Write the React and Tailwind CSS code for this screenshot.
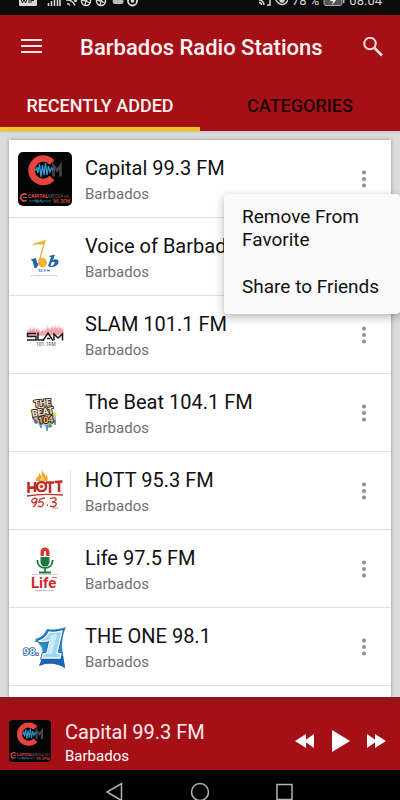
import { useState } from 'react';

function CapitalLogo({ className }) {
  return (
    <svg className={className} viewBox="0 0 54 54" aria-hidden="true">
      <rect width="54" height="54" rx="5" fill="#050505" />
      <path d="M34 10.500A11.700 11.700 0 1 0 34 26" fill="none" stroke="#e8443f" strokeWidth="6.500" />
      <path d="M35.500 24.500V13.500l3.500 5 3.500-5v11" fill="none" stroke="#454446" strokeWidth="2.600" />
      <path d="M16 18h2l1-3 1 6 1.500-9 1.500 13 1.500-12 1.500 10 1.500-12 1.500 12 1.500-9 1.500 6 1.500-4 1.500 2" fill="none" stroke="#2f9bd0" strokeWidth="1.300" />
      <path d="M8.500 43a3.400 3.400 0 1 0 0 5" fill="none" stroke="#e8443f" strokeWidth="1.600" />
      <path d="M5 45.500h4" stroke="#2f9bd0" strokeWidth="1" />
      <text x="10" y="46" fontSize="5" fontWeight="700" fill="#e04a44">CAPITAL</text>
      <text x="30" y="46" fontSize="5" fill="#655f5e">MEDIA</text>
      <text x="46" y="46" fontSize="4" fill="#8b4b48">HD</text>
      <path d="M11 49h5l1-1.500 1 3 1-3 1 3 1-2 1 1 1-2 1 3 1-1.500h8" fill="none" stroke="#2d7ea6" strokeWidth=".8" />
      <text x="35" y="51" fontSize="5" fontWeight="700" fill="#c93a36">99.3FM</text>
    </svg>
  );
}

function VoiceLogo({ className }) {
  return (
    <svg className={className} viewBox="0 0 54 54" aria-hidden="true">
      <path d="M27 11l-1 3-4.500 16" fill="none" stroke="#e9ab2f" strokeWidth="1.200" />
      <path d="M14 16c3-5 8-3 13.500-6.500l-1 4.500c-4 1-8-.5-12.500 2z" fill="#f2b134" />
      <path d="M12.500 29.500l5.500-1.500 1.200 5.500 2-4h2.300L18.500 38h-2L14.500 31z" fill="#1d68ac" />
      <ellipse cx="24.500" cy="32.500" rx="4.500" ry="4.800" fill="#f4b52e" />
      <path d="M31 26l6-1.500-2 5.500c3-1.500 6-.5 5.500 2.500-.6 4-8 6-10.500 3.500l3-8.500zM33.500 32.500l-1 3.500c2 .5 4-1.500 4-3 0-1.500-2-1.500-3-.5z" fill="#1d68ac" fillRule="evenodd" />
      <text x="20" y="42" fontSize="4" fontWeight="700" fontStyle="italic" fill="#3f7eb8">92.9</text>
      <path d="M29 40.500h3" stroke="#3f7eb8" strokeWidth="1.500" />
      <path d="M13 45.500h26" stroke="#b9c0c8" strokeWidth="1.200" strokeDasharray="1.500 1" />
    </svg>
  );
}

function SlamLogo({ className }) {
  return (
    <svg className={className} viewBox="0 0 54 54" aria-hidden="true">
      <path d="M9 28v-5l1-2 1 3 1-6 1 5 1-3 1 2 1-4 1 5 1-1 1-3 1 4 1-2 1 3 2-1 1-2 1 3 1-4 1 3 1-6 1 4 1-2 1 4 1-5 1 3 1-4 1 6 1-7 1 5 1-3 1 4 1-5 1 4 1-2 1 3 1-4 .5 9z" fill="#eda3a6" />
      <g fill="none" stroke="#1c1a1c" strokeWidth="1.500">
        <path d="M18 25.500h-8.500v3H18v3.500H9" />
        <path d="M20 24.500V32h6" />
        <path d="M25 32.500l5-7.500 5 7.500M29 30.500h3" />
        <path d="M36 32.500V26l4 4 4.500-4v6.500" />
      </g>
      <text x="18" y="38" fontSize="5" fill="#4b484b">101.1FM</text>
    </svg>
  );
}

function BeatLogo({ className }) {
  return (
    <svg className={className} viewBox="0 0 54 54" aria-hidden="true">
      <path d="M16 31l1 7 2-1 3 4 3-2 3 3 1 3 2-5 3 1 1-4 3 1V28l-4-2-3-3-12 1z" fill="#9fc6d8" />
      <circle cx="36.500" cy="28.500" r="2" fill="#d9d83c" />
      <circle cx="32" cy="40" r="1.800" fill="#5e9a41" />
      <circle cx="18" cy="36" r="1.800" fill="#397da5" />
      <path d="M29 39v6M37 34v5M23 38v4" stroke="#43769b" strokeWidth="1.300" />
      <path d="M15 25v7l3 4" fill="none" stroke="#9d3a55" strokeWidth="1.500" />
      <g fontWeight="700" fill="#fbf0d6" stroke="#3f2818" strokeWidth="2" strokeLinejoin="round" paintOrder="stroke">
        <text x="16" y="20" fontSize="9" transform="rotate(-6 25 17)">THE</text>
        <text x="14" y="29" fontSize="9" transform="rotate(-9 25 27)">BEAT</text>
        <text x="20" y="37" fontSize="9" fill="#eeb978" transform="rotate(-5 27 34)">104</text>
      </g>
    </svg>
  );
}

function HottLogo({ className }) {
  return (
    <svg className={className} viewBox="0 0 54 54" aria-hidden="true">
      <path d="M18 17c-1-4 4-4 3-8 2 1 2 3 2 4 2-2 0-5 1-8 0 4 4 4 3 8 1-1 1-2 1-3 2 3 2 5 1 7z" fill="#f3a12f" />
      <path d="M22 17c-1-3 3-4 2-6 2 2 3 4 2 6z" fill="#fbd35d" />
      <g fill="none" stroke="#bd2b2b" strokeWidth="2.500">
        <path d="M10.500 18v11M17 18v10M10 24l8-1M28 18.500h8M32 19v10M36.500 18l8-.5M41 18v10" />
        <circle cx="23.500" cy="22.500" r="4.600" />
      </g>
      <circle cx="23.500" cy="22.500" r="1.800" fill="#d8462f" />
      <path d="M9 32c10-2 24-2 36-1" fill="none" stroke="#c02d2d" strokeWidth="1.300" />
      <path d="M19 35c-3-2-6 1-5 3s5 0 5-3c0 3-1 6-4 8M27 34l-5 1-1 3c4-1 5 1 4 3s-3 2-5 1M29 41h1M32 35c3-2 7-1 6 1s-3 2-4 2c3 0 5 1 4 3s-4 2-6 1" fill="none" stroke="#c9382f" strokeWidth="1.400" />
      <path d="M34 44h6" stroke="#cc7772" strokeWidth="1" />
      <path d="M52.500 6v42" stroke="#e4e4e4" />
    </svg>
  );
}

function LifeLogo({ className }) {
  return (
    <svg className={className} viewBox="0 0 54 54" aria-hidden="true">
      <path d="M22.500 14v-4a4.500 4.500 0 0 1 9 0v4z" fill="#dc3730" />
      <path d="M22.500 15h9v5a4.500 4.500 0 0 1-9 0z" fill="#1c7a43" />
      <path d="M26 9h2v5h-2z" fill="#fff" />
      <path d="M19.500 18v1.500a7.500 6.500 0 0 0 15 0V18M27 26v4M21 30.500h12" fill="none" stroke="#1c7a43" strokeWidth="1.800" />
      <path d="M14 32.500h26" stroke="#b3c8ba" strokeWidth=".7" />
      <text x="13" y="46" fontSize="15" fontWeight="700" fill="#cf2a2f">Life</text>
      <path d="M34 35.500h5" stroke="#dc7e7f" strokeWidth="1" />
      <path d="M17 48.500h19" stroke="#b9b9b9" strokeWidth="1" strokeDasharray="3 1" />
    </svg>
  );
}

function OneLogo({ className }) {
  return (
    <svg className={className} viewBox="0 0 54 54" aria-hidden="true">
      <path d="M17 19c5-1 9-4 12-10 6 1 13 0 19-2-3 6-4 13-4 20l3 21c-8-5-17-6-26-2 4-7 4-12 3-18-2-3-4-6-7-9z" fill="#2b8bcb" />
      <path d="M24 38l21-2 2 12c-8-5-17-6-26-2z" fill="#1c66ac" />
      <path d="M21 21c5-2 8-5 10-9 4 1 8 0 13-1l-5 22 4 1-1 4H24l1-4 4-1 3-13c-4 2-7 2-11 1z" fill="#8fd0f1" stroke="#1d5fa8" strokeWidth="3" paintOrder="stroke" />
      <path d="M21 21c5-2 8-5 10-9 4 1 8 0 13-1l-5 22 4 1-1 4H24l1-4 4-1 3-13c-4 2-7 2-11 1z" fill="#9dd7f4" stroke="#f2fbff" strokeWidth="1.300" />
      <path d="M33 15l6-1-5 20h-4z" fill="#c9ebfa" />
      <text x="5" y="35" fontSize="9" fontWeight="700" fontFamily="DejaVu Sans, sans-serif" fill="#dcf1fb" stroke="#2e57a0" strokeWidth="1.500" paintOrder="stroke">98.</text>
    </svg>
  );
}

const STATIONS = [
  { name: 'Capital 99.3 FM', country: 'Barbados', Logo: CapitalLogo },
  { name: 'Voice of Barbados', country: 'Barbados', Logo: VoiceLogo },
  { name: 'SLAM 101.1 FM', country: 'Barbados', Logo: SlamLogo },
  { name: 'The Beat 104.1 FM', country: 'Barbados', Logo: BeatLogo },
  { name: 'HOTT 95.3 FM', country: 'Barbados', Logo: HottLogo },
  { name: 'Life 97.5 FM', country: 'Barbados', Logo: LifeLogo },
  { name: 'THE ONE 98.1', country: 'Barbados', Logo: OneLogo },
];

function StatusBar() {
  return (
    <div className="h-[15px] shrink-0 overflow-hidden bg-[#0c0c0c] text-[#d8d8d8]">
      <div className="-mt-2 flex h-[18px] items-center justify-between px-[18px] text-[13px]">
        <svg className="h-[18px] w-[122px]" viewBox="0 0 122 18" fill="none" aria-hidden="true">
          <rect x="1" y="2" width="18" height="12" rx="1" fill="#d8d8d8" />
          <path d="M3 7l1.500 4L6 7l1.500 4L9 7M11 6v5M13 11V6h3M13 8.500h3" stroke="#222" />
          <path d="M30.500 14v-3M33.500 14V9M36.500 14V7M39.500 14V5M42 14V3" stroke="#d8d8d8" strokeWidth="1.600" />
          <path d="M48 8a9 9 0 0 1 9 5.500M49 11.500a4 4 0 0 1 3 2M57 8v2M53 6l6 3" stroke="#d8d8d8" strokeWidth="1.500" />
          <circle cx="68" cy="9" r="4.500" stroke="#d8d8d8" strokeWidth="1.500" />
          <path d="M64 8l4 1-1 4M71 6l-3 3 4 2" stroke="#d8d8d8" strokeWidth="1.300" />
          <circle cx="83" cy="9" r="4.500" stroke="#d8d8d8" strokeWidth="1.500" />
          <path d="M79 8l4 1-1 4M86 6l-3 3 4 2" stroke="#d8d8d8" strokeWidth="1.300" />
          <path d="M96 12a3 3 0 0 1 0-5 4 4 0 0 1 7 0 2.500 2.500 0 0 1 0 5z" fill="#bbb" />
          <circle cx="114.500" cy="9" r="4.500" stroke="#d8d8d8" strokeWidth="1.800" />
          <circle cx="114.500" cy="9" r="1.800" fill="#d8d8d8" />
        </svg>
        <div className="flex items-center gap-1">
          <svg className="h-[18px] w-[30px]" viewBox="0 0 30 18" fill="none" stroke="#d8d8d8" strokeWidth="1.500" aria-hidden="true">
            <path d="M1 6V4h11v9H9M1 8a5 5 0 0 1 5 5M1 10.500A2.500 2.500 0 0 1 3.500 13" />
            <path d="M18 8c3-5 9-5 12 0-3 6-9 6-12 0z" />
            <circle cx="24" cy="8" r="2" fill="#d8d8d8" />
          </svg>
          <span>78 %</span>
          <svg className="h-[18px] w-[22px]" viewBox="0 0 22 18" aria-hidden="true">
            <rect x="1" y="3" width="18" height="10.500" rx="2" fill="#555" stroke="#aaa" />
            <path d="M20 6h1.500v5H20z" fill="#aaa" />
            <path d="M11 3l-4 6h3l-1 4 5-6h-3z" fill="#eee" />
          </svg>
          <span>08.04</span>
        </div>
      </div>
    </div>
  );
}

function StationRow({ station, onMenu }) {
  const { name, country, Logo } = station;
  return (
    <li className="flex h-[78px] shrink-0 items-center border-b border-[#e0e0e0] pl-[9px] pr-[15px]">
      <Logo className="h-[54px] w-[54px] shrink-0" />
      <div className="ml-[13px] min-w-0 flex-1 pt-[3px]">
        <h2 className="truncate text-[20px] leading-7 text-[#111]">{name}</h2>
        <p className="text-[15px] leading-6 text-[#707070]">{country}</p>
      </div>
      <button type="button" aria-label={`Options for ${name}`} onClick={onMenu} className="flex h-8 w-6 items-center justify-center">
        <svg className="h-[18px] w-1" viewBox="0 0 4 18" fill="#8e8e8e" aria-hidden="true">
          <circle cx="2" cy="2.500" r="2" />
          <circle cx="2" cy="9" r="2" />
          <circle cx="2" cy="15.500" r="2" />
        </svg>
      </button>
    </li>
  );
}

export default function App() {
  const [tab, setTab] = useState('recent');
  const [menuOpen, setMenuOpen] = useState(true);

  return (
    <div className="flex h-screen flex-col overflow-hidden bg-[#dcdcdc] font-[Roboto,sans-serif]">
      <StatusBar />

      <header className="z-10 shrink-0 bg-[#a51017] shadow-sm">
        <div className="flex h-16 items-center pl-[21px] pr-[17px]">
          <button type="button" aria-label="Menu">
            <svg className="h-4 w-[21px]" viewBox="0 0 21 16" stroke="#fbe9e9" strokeWidth="2" aria-hidden="true">
              <path d="M0 1h21M0 7h21M0 13h21" />
            </svg>
          </button>
          <h1 className="ml-[38px] flex-1 text-[22px] font-medium text-[#fff3f3]">Barbados Radio Stations</h1>
          <button type="button" aria-label="Search">
            <svg className="h-5 w-5" viewBox="0 0 20 20" fill="none" stroke="#f8dede" strokeWidth="2" aria-hidden="true">
              <circle cx="7" cy="6.500" r="5.800" />
              <path d="M11.500 11l7.500 7.500" strokeWidth="2.500" />
            </svg>
          </button>
        </div>
        <div className="grid h-[52px] grid-cols-2 text-[18px] font-medium" role="tablist">
          <button
            type="button"
            role="tab"
            aria-selected={tab === 'recent'}
            onClick={() => setTab('recent')}
            className={tab === 'recent' ? 'border-b-4 border-[#f3c61d] pt-1 text-[#fff0f0]' : 'border-b-4 border-transparent pt-1 text-[#1c0203]'}
          >
            RECENTLY ADDED
          </button>
          <button
            type="button"
            role="tab"
            aria-selected={tab === 'categories'}
            onClick={() => setTab('categories')}
            className={tab === 'categories' ? 'border-b-4 border-[#f3c61d] pt-1 text-[#fff0f0]' : 'border-b-4 border-transparent pt-1 text-[#1c0203]'}
          >
            CATEGORIES
          </button>
        </div>
      </header>

      <main className="relative flex min-h-0 flex-1 flex-col px-[9px] pt-[9px]">
        <ul className="flex min-h-0 flex-1 flex-col overflow-hidden bg-white shadow-[0_0_4px_rgba(0,0,0,0.35)]">
          {STATIONS.map((s) => (
            <StationRow key={s.name} station={s} onMenu={() => setMenuOpen(!menuOpen)} />
          ))}
        </ul>
        {menuOpen && (
          <div role="menu" className="absolute right-0 top-[63px] w-44 rounded-sm bg-[#fafafa] text-[19px] leading-[23px] text-[#111] shadow-[0_3px_10px_rgba(0,0,0,0.3)]">
            <button type="button" role="menuitem" className="block w-full px-[18px] pb-3 pt-[11px] text-left">
              Remove From Favorite
            </button>
            <button type="button" role="menuitem" className="block w-full whitespace-nowrap pb-4 pl-[18px] pt-3 text-left">
              Share to Friends
            </button>
          </div>
        )}
      </main>

      <footer className="z-10 shrink-0">
        <div className="flex h-[73px] items-center border-t-8 border-[#96141a] bg-[#a51017] pl-[9px] pr-[14px] pt-[6px]">
          <CapitalLogo className="h-[42px] w-[42px] shrink-0" />
          <div className="ml-[14px] min-w-0 flex-1 pt-[6px]">
            <p className="truncate text-[20px] leading-6 text-[#ffecec]">Capital 99.3 FM</p>
            <p className="text-[15px] leading-6 text-white">Barbados</p>
          </div>
          <div className="flex items-center gap-4">
            <button type="button" aria-label="Previous station">
              <svg className="h-6 w-5" viewBox="0 0 20 24" fill="#fff" aria-hidden="true">
                <path d="M1 12l11-7v14zM10 12l10-7v14z" />
              </svg>
            </button>
            <button type="button" aria-label="Play">
              <svg className="h-6 w-5" viewBox="0 0 20 24" fill="#fff" aria-hidden="true">
                <path d="M2 1l18 11L2 23z" />
              </svg>
            </button>
            <button type="button" aria-label="Next station">
              <svg className="h-6 w-5" viewBox="0 0 20 24" fill="#fff" aria-hidden="true">
                <path d="M20 12L9 5v14zM11 12L1 5v14z" />
              </svg>
            </button>
          </div>
        </div>
        <nav className="flex h-[30px] items-start justify-center gap-[60px] overflow-hidden bg-black pt-[10px]" aria-label="System">
          <button type="button" aria-label="Back">
            <svg className="h-6 w-6" viewBox="0 0 24 24" fill="none" stroke="#b4b4b4" strokeWidth="1.500" aria-hidden="true">
              <path d="M17.500 3.500v17L3 12z" />
            </svg>
          </button>
          <button type="button" aria-label="Home">
            <svg className="h-6 w-6" viewBox="0 0 24 24" fill="none" stroke="#b4b4b4" strokeWidth="1.500" aria-hidden="true">
              <circle cx="12" cy="12" r="8.500" />
            </svg>
          </button>
          <button type="button" aria-label="Recent apps">
            <svg className="h-6 w-6" viewBox="0 0 24 24" fill="none" stroke="#b4b4b4" strokeWidth="1.500" aria-hidden="true">
              <path d="M5 4.500h15v15H5z" />
            </svg>
          </button>
        </nav>
      </footer>
    </div>
  );
}
